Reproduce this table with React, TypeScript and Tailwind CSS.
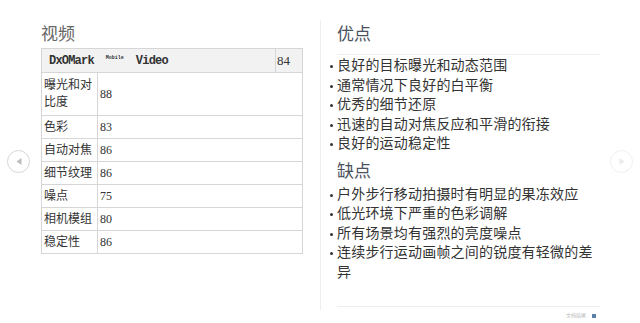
import React from "react";

const cjk = "font-['Liberation_Serif','Noto_Sans_CJK_SC',serif]";

const rows: { label: string; value: string; tall?: boolean }[] = [
  { label: "曝光和对比度", value: "88", tall: true },
  { label: "色彩", value: "83" },
  { label: "自动对焦", value: "86" },
  { label: "细节纹理", value: "86" },
  { label: "噪点", value: "75" },
  { label: "相机模组", value: "80" },
  { label: "稳定性", value: "86" },
];

const pros = [
  "良好的目标曝光和动态范围",
  "通常情况下良好的白平衡",
  "优秀的细节还原",
  "迅速的自动对焦反应和平滑的衔接",
  "良好的运动稳定性",
];

const cons = [
  "户外步行移动拍摄时有明显的果冻效应",
  "低光环境下严重的色彩调解",
  "所有场景均有强烈的亮度噪点",
  "连续步行运动画帧之间的锐度有轻微的差异",
];

function Bullets({ items }: { items: string[] }) {
  return (
    <ul className="flex flex-col">
      {items.map((t) => (
        <li key={t} className="flex items-start text-[14px] leading-[19.5px] text-[#333]">
          <span className="flex h-[19.5px] w-[8px] shrink-0 items-center pt-[2px] pl-[1px]">
            <span className="block h-[3px] w-[3px] rounded-full bg-[#333]" />
          </span>
          <span className="w-[262px] tracking-[0.2px]">{t}</span>
        </li>
      ))}
    </ul>
  );
}

function Arrow({ dir }: { dir: "left" | "right" }) {
  const left = dir === "left";
  return (
    <div
      className={
        left
          ? "absolute left-[7px] top-[150px] flex h-[23px] w-[23px] items-center justify-center rounded-full border-[1.5px] border-[#d6d6d6]"
          : "absolute left-[610px] top-[150px] flex h-[23px] w-[23px] items-center justify-center rounded-full border-[1.5px] border-[#efefef]"
      }
    >
      <svg width="8" height="9" viewBox="0 0 8 9">
        {left ? (
          <path d="M1.5 4.5 L6.5 1 L6.5 8 Z" fill="#bdbdbd" />
        ) : (
          <path d="M6.5 4.5 L1.5 1 L1.5 8 Z" fill="#ebebeb" />
        )}
      </svg>
    </div>
  );
}

export default function App() {
  return (
    <div className={`relative flex h-[323px] w-[640px] overflow-hidden bg-white ${cjk}`}>
      <Arrow dir="left" />
      <Arrow dir="right" />

      {/* video score table */}
      <div className="w-[320px] shrink-0 pl-[41px] pt-[24px]">
        <div className="mb-[3px] text-[17px] leading-[21px] text-[#666]">视频</div>
        <div className="w-[262px] border border-[#d6d6d6] text-[#333]">
          <div className="flex h-[23px] items-center bg-[#f2f2f2]">
            <div className="flex w-[233px] items-center pl-[7px]">
              <span className="font-['Liberation_Mono',monospace] text-[12px] font-bold tracking-[-0.8px]">
                DxOMark
              </span>
              <span className="ml-[12px] self-start pt-[3px] font-['Liberation_Mono',monospace] text-[5px] font-bold leading-[6px]">
                Mobile
              </span>
              <span className="ml-[12px] font-['Liberation_Mono',monospace] text-[12px] font-bold tracking-[-0.8px]">
                Video
              </span>
            </div>
            <div className="flex h-full flex-1 items-center border-l border-[#d6d6d6] pl-[1px] text-[13px]">
              84
            </div>
          </div>
          {rows.map((r) => (
            <div
              key={r.label}
              className={`flex border-t border-[#d6d6d6] ${r.tall ? "h-[43px]" : "h-[23px]"}`}
            >
              <div className="flex w-[55px] items-center pl-[2px] text-[12px] leading-[17px]">
                {r.label}
              </div>
              <div className="flex flex-1 items-center border-l border-[#d6d6d6] pl-[2px] text-[12px]">
                {r.value}
              </div>
            </div>
          ))}
        </div>
      </div>

      {/* pros and cons */}
      <div className="flex w-[280px] shrink-0 flex-col">
        <div className="mt-[20px] h-[290px] border-l border-[#eeeeee] pl-[16px] pt-[4px]">
          <div className="flex h-[283px] w-[263px] flex-col border-b border-[#eeeeee]">
            <div className="border-b border-[#f0f0f0] pb-[9px] text-[17px] leading-[21px] text-[#4a5260]">
              优点
            </div>
            <div className="ml-[-8px] pt-[1px]">
              <Bullets items={pros} />
            </div>
            <div className="mt-[7px] text-[17px] leading-[21px] text-[#4a5260]">缺点</div>
            <div className="ml-[-8px] mt-[3px]">
              <Bullets items={cons} />
            </div>
          </div>
        </div>
        <div className="flex items-center justify-end gap-[6px] pr-[4px] pt-[3px]">
          <span className="text-[5px] leading-[6px] text-[#bbb]">文档结尾</span>
          <span className="block h-[4px] w-[4px] bg-[#5b7fa6]" />
        </div>
      </div>
    </div>
  );
}
